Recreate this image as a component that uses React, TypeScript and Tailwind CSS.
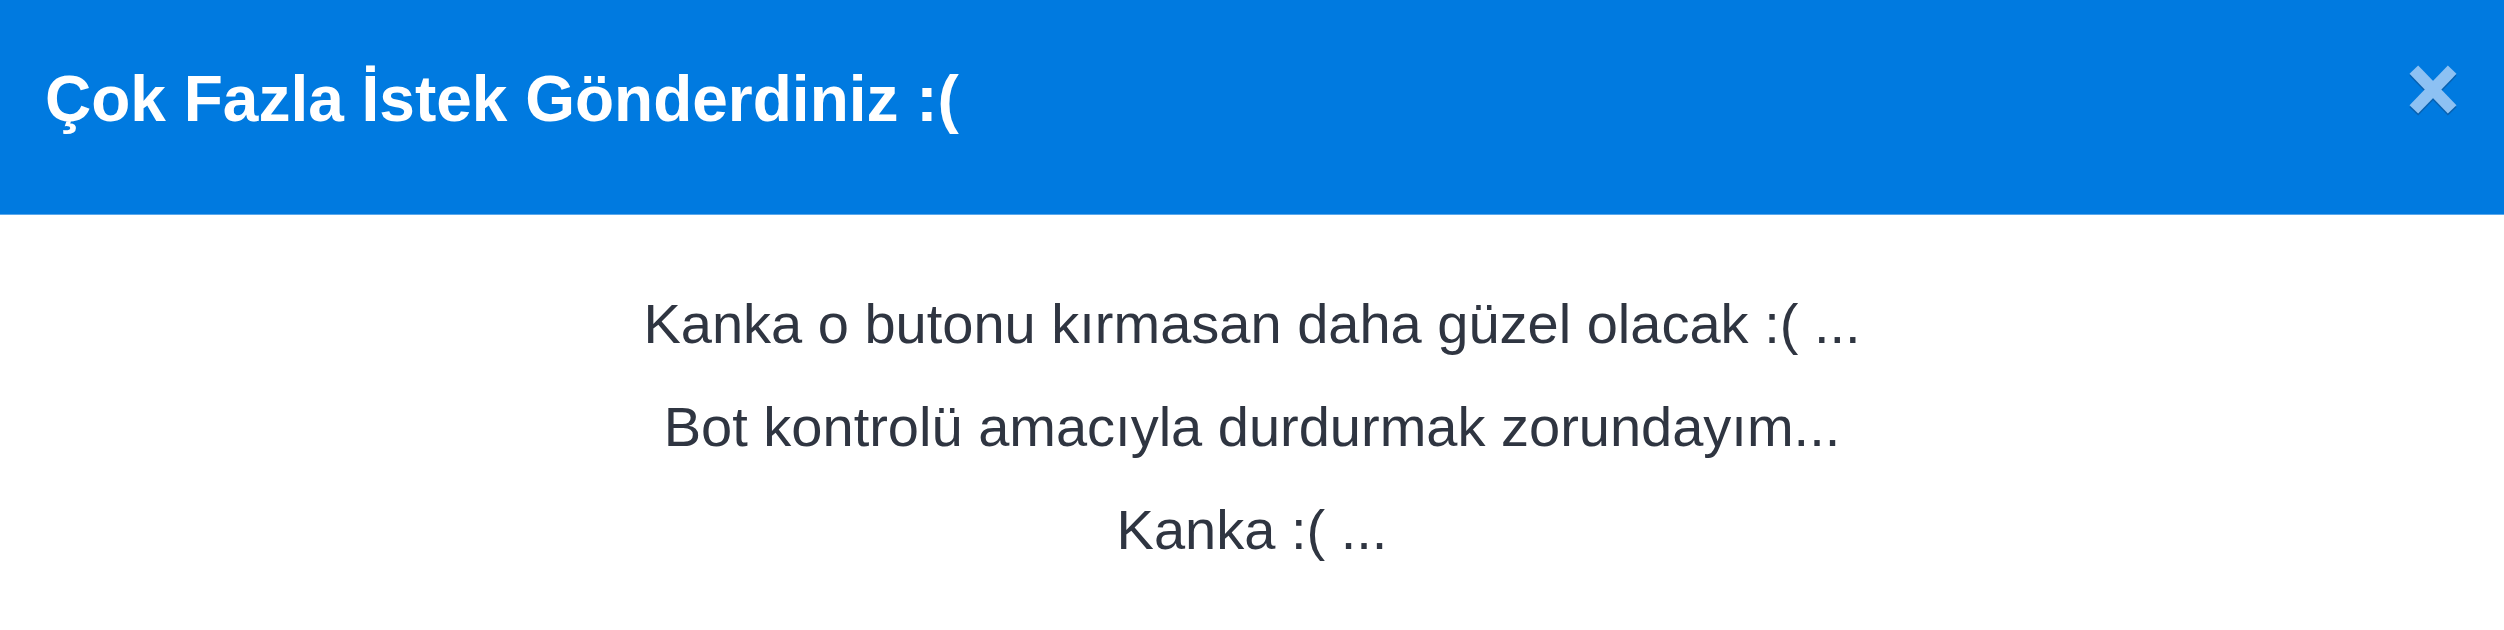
import React from "react";

export default function App() {
  return (
    <div className="w-[2504px] h-[630px] bg-white" style={{ fontFamily: '"Liberation Sans", Arial, sans-serif' }}>
      <div className="relative h-[215px] bg-[#007ae0] border-b border-[#5aa8ec] pl-[45px] pt-[63px]">
        <h1 className="text-[64px] leading-[72px] font-bold text-white">Çok Fazla İstek Gönderdiniz :(</h1>
        <button className="absolute left-[2411px] top-[67px] w-[44px] h-[45px]" aria-label="close">
          <svg viewBox="0 0 44 45" width="44" height="45" style={{ overflow: "visible" }}>
            <g stroke="#0a4f91" strokeWidth="12" strokeLinecap="square" opacity="0.6" transform="translate(0,2)">
              <line x1="7" y1="7" x2="37" y2="38" />
              <line x1="37" y1="7" x2="7" y2="38" />
            </g>
            <g stroke="#8dc1f3" strokeWidth="12" strokeLinecap="square">
              <line x1="7" y1="7" x2="37" y2="38" />
              <line x1="37" y1="7" x2="7" y2="38" />
            </g>
          </svg>
        </button>
      </div>
      <div className="flex flex-col items-center pt-[57px] text-[56px] leading-[103px] text-[#2f3541]">
        <p>Kanka o butonu kırmasan daha güzel olacak :( ...</p>
        <p>Bot kontrolü amacıyla durdurmak zorundayım...</p>
        <p>Kanka :( ...</p>
      </div>
    </div>
  );
}
